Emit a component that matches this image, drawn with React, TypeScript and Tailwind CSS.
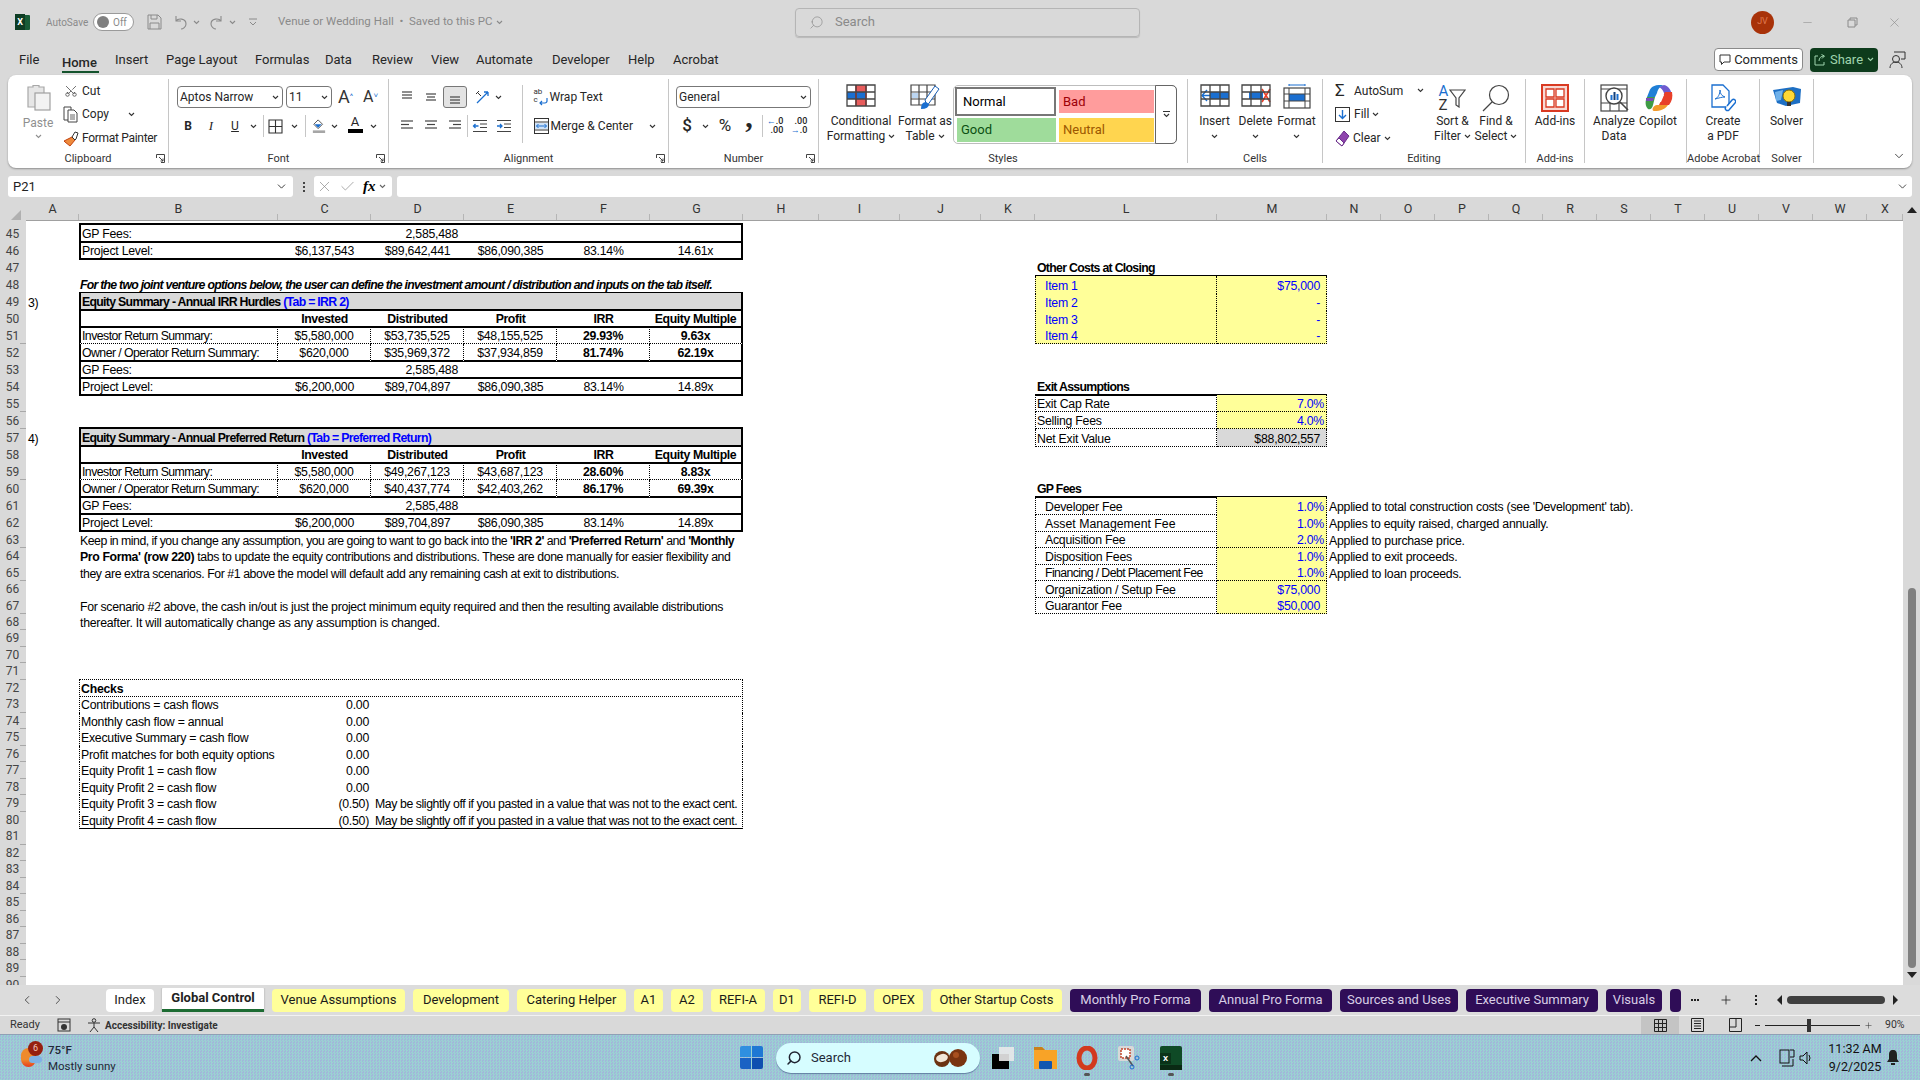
import type { ReactNode } from 'react';
import { Check, ChevronDown, ChevronLeft, ChevronRight, Minus, Plus, Scissors, Search, X } from 'lucide-react';

const GRID =
  'grid grid-cols-[26px_53px_199px_93px_93px_93px_93px_93px_76px_81px_81px_54px_182px_110px_54px_54px_54px_54px_54px_54px_54px_54px_54px_54px_36px]';

const Chev = ({ color = '#333' }: { color?: string }) => (
  <svg width="7" height="5" viewBox="0 0 7 5" className="shrink-0">
    <path d="M1 1l2.5 2.5L6 1" stroke={color} strokeWidth="1.1" fill="none" />
  </svg>
);

const Launcher = () => (
  <svg width="9" height="9" viewBox="0 0 9 9" className="shrink-0">
    <path d="M.5 4V.5H8.5V8.5H5M3 3l4 4M7 4.5V7H4.5" stroke="#444" strokeWidth="1" fill="none" />
  </svg>
);

function Slot({ className, children }: { className: string; children?: ReactNode }) {
  return <div className={`flex items-center justify-center shrink-0 h-full ${className}`}>{children}</div>;
}

function Group({ className, label, launcher, children }: { className: string; label?: string; launcher?: boolean; children: ReactNode }) {
  return (
    <div className={`flex flex-col shrink-0 h-[84px] border-r border-[#c6c6c6] ${className}`}>
      <div className="flex h-[71px]">{children}</div>
      <div className="relative h-[13px] text-center text-[11px] leading-[18px] text-[#333] whitespace-nowrap">
        {label}
        {launcher && (
          <span className="absolute right-[3px] top-[4px] flex">
            <Launcher />
          </span>
        )}
      </div>
    </div>
  );
}

function BigButton({ className, icon, lines, drop }: { className: string; icon: ReactNode; lines: string[]; drop?: 'inline' | 'below' }) {
  return (
    <div className={`flex flex-col items-center shrink-0 pt-[5px] text-[12px] leading-[15px] text-[#262626] ${className}`}>
      <div className="h-[30px] flex items-start justify-center">{icon}</div>
      {lines.map((l, i) => (
        <div key={l} className="flex items-center gap-[3px] whitespace-nowrap h-[15px]">
          {l}
          {drop === 'inline' && i === lines.length - 1 && <Chev />}
        </div>
      ))}
      {drop === 'below' && (
        <div className="h-[15px] flex items-center">
          <Chev />
        </div>
      )}
    </div>
  );
}

const Lines = ({ rows, x = [[2, 14], [2, 14], [2, 14]] }: { rows: number[]; x?: number[][] }) => (
  <svg width="16" height="16" viewBox="0 0 16 16">
    {rows.map((y, i) => (
      <path key={y} d={`M${x[i][0]} ${y}H${x[i][1]}`} stroke="#444" strokeWidth="1.2" />
    ))}
  </svg>
);

const Indent = ({ out }: { out?: boolean }) => (
  <svg width="16" height="14" viewBox="0 0 16 14">
    <path d="M1 1.5H15M8 5H15M8 8.5H15M1 12.5H15" stroke="#444" strokeWidth="1.1" />
    <path d={out ? 'M6.5 7H1.5M3.5 5L1.5 7l2 2' : 'M1 7H6M4 5l2 2-2 2'} stroke="#1b6fd0" strokeWidth="1.3" fill="none" />
  </svg>
);

const PasteIcon = () => (
  <svg width="27" height="28" viewBox="0 0 27 28">
    <path d="M3 4H8V2.5H14V4H19V24H3Z" fill="#e6e6e6" stroke="#a8a8a8" strokeWidth="1.2" />
    <rect x="10" y="10" width="15" height="17" fill="#f2f2f2" stroke="#a0a0a0" strokeWidth="1.2" />
  </svg>
);

const CopyIcon = () => (
  <svg width="15" height="17" viewBox="0 0 15 17">
    <path d="M1 1H8V14H1Z" fill="#fff" stroke="#444" />
    <path d="M5 4H11L14 7V16H5Z" fill="#fff" stroke="#444" />
    <path d="M7 9H12M7 11H12M7 13H12" stroke="#666" />
  </svg>
);

const PainterIcon = () => (
  <svg width="16" height="17" viewBox="0 0 16 17">
    <path d="M9 7l3 3-5 6-5-4-1-1Z" fill="#ee8a3c" stroke="#c2410c" />
    <path d="M9 7l3-5 3 1-2 6-1 1Z" fill="#fff" stroke="#333" />
  </svg>
);

const FillIcon = () => (
  <svg width="16" height="18" viewBox="0 0 16 18">
    <path d="M7 2l5 5-5 5-5-5Z" fill="#fff" stroke="#444" />
    <path d="M3 7h8l-4 4Z" fill="#1b6fd0" />
    <rect x="1" y="14" width="14" height="3" fill="#a6a6a6" />
  </svg>
);

const BordersIcon = () => (
  <svg width="15" height="15" viewBox="0 0 15 15">
    <path d="M1 1H14V14H1ZM7.5 1V14M1 7.5H14" stroke="#333" strokeWidth="1.1" fill="none" />
  </svg>
);

const WrapIcon = () => (
  <div className="relative w-[14px] h-[18px] text-[8px] leading-[8px] text-[#333]">
    <span>ab</span>
    <br />
    <span>c</span>
    <svg width="9" height="9" viewBox="0 0 9 9" className="absolute right-0 bottom-0">
      <path d="M8 1v3a2 2 0 0 1-2 2H1M3 4L1 6l2 2" stroke="#1b6fd0" strokeWidth="1.2" fill="none" />
    </svg>
  </div>
);

const MergeIcon = () => (
  <svg width="15" height="16" viewBox="0 0 15 16">
    <rect x=".5" y=".5" width="14" height="15" fill="#fff" stroke="#333" />
    <path d="M.5 4H14.5M.5 12H14.5" stroke="#333" />
    <rect x="1" y="5" width="13" height="6" fill="#cfe2f7" />
    <path d="M2.5 8H12.5M4.5 6L2.5 8l2 2M10.5 6l2 2-2 2" stroke="#1b6fd0" fill="none" />
  </svg>
);

const Cells = ({ children }: { children?: ReactNode }) => (
  <svg width="30" height="23" viewBox="0 0 30 23">
    <rect x="1" y="1" width="28" height="21" fill="#fff" />
    {children}
    <path d="M1 1H29V22H1ZM1 8H29M1 15H29M10 1V22M20 1V22" stroke="#444" strokeWidth="1.3" fill="none" />
  </svg>
);

const ConditionalIcon = () => (
  <Cells>
    <rect x="10" y="1" width="10" height="21" fill="#e85c5c" />
    <rect x="1" y="8" width="9" height="7" fill="#1b6fd0" />
    <rect x="10" y="8" width="10" height="7" fill="#1b6fd0" />
    <rect x="20" y="8" width="9" height="7" fill="#fff" />
    <path d="M10 1V22M20 1V22" stroke="#d62b2b" strokeWidth="1.5" />
  </Cells>
);

const FormatTableIcon = () => (
  <svg width="30" height="26" viewBox="0 0 30 26">
    <path d="M1 1H25V21H1ZM1 8H25M1 15H25M9 1V21M17 1V21" stroke="#444" strokeWidth="1.2" fill="none" />
    <rect x="2" y="9" width="6" height="5" fill="#bcd6f2" />
    <path d="M17 22L29 5l-4-3-10 14Z" fill="#fff" stroke="#1b5fb5" />
    <path d="M11 25q0-7 5-7l3 2q0 5-8 5Z" fill="#1b6fd0" />
  </svg>
);

const SortIcon = () => (
  <div className="flex items-center gap-[1px]">
    <div className="flex flex-col text-[15px] leading-[14px] text-[#1b6fd0]">
      <span>A</span>
      <span className="text-[#333]">Z</span>
    </div>
    <svg width="17" height="19" viewBox="0 0 17 19">
      <path d="M1 1H16L10 9V18L7 16V9Z" fill="#fff" stroke="#444" strokeWidth="1.2" />
    </svg>
  </div>
);

const FindIcon = () => (
  <svg width="28" height="28" viewBox="0 0 28 28">
    <circle cx="17" cy="11" r="9.5" fill="none" stroke="#444" strokeWidth="1.2" />
    <path d="M10 18L1 27" stroke="#444" strokeWidth="1.3" />
  </svg>
);

const AddInsIcon = () => (
  <svg width="28" height="28" viewBox="0 0 28 28">
    <rect x="1" y="1" width="26" height="26" fill="#f8d9d4" stroke="#d93a22" strokeWidth="2" />
    <path d="M5 5H13V13H5ZM15 5H23V13H15ZM5 15H13V23H5ZM15 15H23V23H15Z" fill="#fff" stroke="#d93a22" strokeWidth="1.3" />
  </svg>
);

const AnalyzeIcon = () => (
  <svg width="29" height="28" viewBox="0 0 29 28">
    <rect x="1" y="1" width="26" height="26" fill="#fff" stroke="#444" strokeWidth="1.2" />
    <path d="M1 5H27M1 19H27M10 19V27M19 19V27" stroke="#444" strokeWidth="1.1" />
    <circle cx="14" cy="12" r="8" fill="#fff" stroke="#444" strokeWidth="1.4" />
    <rect x="10.5" y="11" width="2" height="5" fill="#1b6fd0" />
    <rect x="13.5" y="8" width="2" height="8" fill="#123f7a" />
    <rect x="16.5" y="10" width="2" height="6" fill="#1b6fd0" />
    <path d="M20 18l8 8" stroke="#444" strokeWidth="1.6" />
  </svg>
);

const CopilotIcon = () => (
  <svg width="29" height="28" viewBox="0 0 29 28">
    <path d="M5 8C7 1 12 1 20 1c-4 1-6 4-7 8l-2 4H3Z" fill="#1f7fd6" />
    <path d="M3 13h8l-2 8c-1 4-3 5-5 4-3-3-3-8-1-12Z" fill="#3e9b45" />
    <path d="M2 14h8l-1 3H2Z" fill="#7a4bb5" />
    <path d="M20 1c5 1 8 6 8 13h-7l-1-5c-1-3-3-5-5-6Z" fill="#6e5bd0" />
    <path d="M21 8h7c1 5 0 9-3 13H15Z" fill="#e8402a" />
    <path d="M10 27c-3 0-1-6 3-6h11c-3 4-7 6-14 6Z" fill="#f19a2b" />
    <path d="M14 11h6l-3 7h-6Z" fill="#fff" />
  </svg>
);

const PdfIcon = () => (
  <svg width="26" height="29" viewBox="0 0 26 29">
    <path d="M2 1H13L19 7V23H2Z" fill="#fff" stroke="#1b6fd0" strokeWidth="1.3" />
    <path d="M5 15c3-1 5-5 5-9 0 4 2 6 5 7-3 0-6 1-10 2Z" fill="none" stroke="#1b6fd0" />
    <path d="M17 22l5-6a2 2 0 0 1 3 3l-6 7a2 2 0 0 1-3-3" fill="#fff" stroke="#1b6fd0" strokeWidth="1.5" />
  </svg>
);

const SolverIcon = () => (
  <svg width="30" height="25" viewBox="0 0 30 25">
    <path d="M1 6l20-3 8 2-1 14-14 3-9-3Z" fill="#1d6fc4" />
    <path d="M3 8l8-2-2 10-5 1Z" fill="#6fb1ea" />
    <circle cx="17" cy="12" r="6" fill="#fdd835" stroke="#8a6d00" />
    <rect x="15" y="18" width="4" height="4" fill="#333" />
  </svg>
);

function Ribbon() {
  return (
    <div className="h-[93px] mx-[8px] bg-white rounded-[8px] shadow-[0_1px_2px_rgba(0,0,0,0.35)] pt-[4px] flex text-[12px] text-[#262626] shrink-0">
      <Group className="w-[161px]" label="Clipboard" launcher>
        <div className="ml-[12px] w-[36px] pt-[4px] flex flex-col items-center text-[#8f8f8f]">
          <PasteIcon />
          <div className="mt-[4px] leading-[16px]">Paste</div>
          <div className="mt-[3px]">
            <Chev color="#8f8f8f" />
          </div>
        </div>
        <div className="ml-[7px] flex flex-col">
          <div className="h-[23px] flex items-center">
            <span className="w-[19px] pl-[1px]">
              <Scissors size={14} strokeWidth={1.2} className="-rotate-90 text-[#333]" />
            </span>
            Cut
          </div>
          <div className="h-[24px] flex items-center">
            <span className="w-[19px] flex">
              <CopyIcon />
            </span>
            Copy
            <span className="ml-[19px]">
              <Chev />
            </span>
          </div>
          <div className="h-[24px] flex items-center tracking-[-0.3px]">
            <span className="w-[19px] flex">
              <PainterIcon />
            </span>
            Format Painter
          </div>
        </div>
      </Group>

      <Group className="w-[220px]" label="Font" launcher>
        <div className="pt-[7px]">
          <div className="flex h-[22px] ml-[8px]">
            <div className="w-[106px] border border-[#777] rounded-[4px] flex items-center justify-between pl-[2px] pr-[3px]">
              Aptos Narrow
              <Chev />
            </div>
            <div className="w-[46px] ml-[3px] border border-[#777] rounded-[4px] flex items-center justify-between pl-[2px] pr-[3px]">
              11
              <Chev />
            </div>
            <div className="ml-[6px] w-[17px] text-[18px] leading-[22px] text-[#333] whitespace-nowrap">A<sup className="text-[8px] text-[#1b6fd0]">^</sup></div>
            <div className="ml-[8px] w-[15px] text-[16px] leading-[22px] text-[#333] whitespace-nowrap">A<sup className="text-[8px] text-[#1b6fd0]">˅</sup></div>
          </div>
          <div className="flex h-[22px] mt-[7px] ml-[8px]">
            <Slot className="w-[22px] font-bold">B</Slot>
            <Slot className="w-[24px] italic [font-family:'Liberation_Serif',serif] text-[13px]">I</Slot>
            <Slot className="w-[24px] underline">U</Slot>
            <Slot className="w-[12px]"><Chev /></Slot>
            <div className="ml-[4px] w-px h-[22px] bg-[#c6c6c6]" />
            <Slot className="w-[16px] ml-[3px]"><BordersIcon /></Slot>
            <Slot className="w-[22px]"><Chev /></Slot>
            <div className="w-px h-[22px] bg-[#c6c6c6]" />
            <Slot className="w-[14px] ml-[6px]"><FillIcon /></Slot>
            <Slot className="w-[16px]"><Chev /></Slot>
            <div className="ml-[5px] w-[16px] flex flex-col items-center leading-[14px] text-[13px]">
              A
              <span className="w-[15px] h-[4px] bg-black" />
            </div>
            <Slot className="w-[20px]"><Chev /></Slot>
          </div>
        </div>
      </Group>

      <Group className="w-[280px]" label="Alignment" launcher>
        <div className="w-[133px] pt-[7px]">
          <div className="flex h-[22px] ml-[6px]">
            <Slot className="w-[24px]"><Lines rows={[3, 6, 9]} x={[[3, 13], [3, 13], [3, 13]]} /></Slot>
            <Slot className="w-[24px]"><Lines rows={[5, 8, 11]} x={[[3, 13], [4, 12], [3, 13]]} /></Slot>
            <Slot className="w-[24px] bg-[#e3e3e3] border border-[#777] rounded-[3px]"><Lines rows={[8, 11, 14]} x={[[3, 13], [3, 13], [3, 13]]} /></Slot>
            <Slot className="w-[22px] ml-[4px]">
              <svg width="15" height="15" viewBox="0 0 15 15">
                <path d="M2 13L13 2M13 2H9M13 2V6" stroke="#1b6fd0" strokeWidth="1.3" fill="none" />
                <path d="M2 2l4 4M4 1l-3 3" stroke="#333" fill="none" />
              </svg>
            </Slot>
            <Slot className="w-[10px]"><Chev /></Slot>
          </div>
          <div className="flex h-[22px] mt-[7px] ml-[6px]">
            <Slot className="w-[24px]"><Lines rows={[3, 6.5, 10]} x={[[2, 14], [2, 10], [2, 14]]} /></Slot>
            <Slot className="w-[24px]"><Lines rows={[3, 6.5, 10]} x={[[2, 14], [4, 12], [2, 14]]} /></Slot>
            <Slot className="w-[24px]"><Lines rows={[3, 6.5, 10]} x={[[2, 14], [6, 14], [2, 14]]} /></Slot>
            <div className="w-px h-[22px] bg-[#c6c6c6]" />
            <Slot className="w-[24px]"><Indent out /></Slot>
            <Slot className="w-[24px]"><Indent /></Slot>
          </div>
        </div>
        <div className="w-px h-[58px] mt-[6px] bg-[#c6c6c6]" />
        <div className="pl-[11px] pt-[7px] w-[146px]">
          <div className="h-[22px] flex items-center gap-[2px]">
            <WrapIcon />
            Wrap Text
          </div>
          <div className="h-[22px] mt-[7px] flex items-center gap-[2px]">
            <MergeIcon />
            Merge &amp; Center
            <span className="ml-[14px]">
              <Chev />
            </span>
          </div>
        </div>
      </Group>

      <Group className="w-[150px]" label="Number" launcher>
        <div className="pt-[7px]">
          <div className="ml-[7px] w-[135px] h-[22px] border border-[#777] rounded-[4px] flex items-center justify-between pl-[2px] pr-[3px]">
            General
            <Chev />
          </div>
          <div className="flex h-[22px] mt-[7px] ml-[8px]">
            <Slot className="w-[20px] text-[17px] font-medium">$</Slot>
            <Slot className="w-[16px]"><Chev /></Slot>
            <Slot className="w-[24px] text-[17px]">%</Slot>
            <Slot className="w-[24px]">
              <span className="text-[30px] font-bold leading-none -translate-y-[9px] [font-family:'Liberation_Serif',serif]">,</span>
            </Slot>
            <div className="ml-[1px] w-px h-[22px] bg-[#c6c6c6]" />
            <Slot className="w-[24px] text-[9px] leading-[9px]">
              <div className="font-medium text-right"><span className="text-[#1b6fd0]">←</span>.0<br />.00</div>
            </Slot>
            <Slot className="w-[24px] text-[9px] leading-[9px]">
              <div className="font-medium text-right">.00<br /><span className="text-[#1b6fd0]">→</span>.0</div>
            </Slot>
          </div>
        </div>
      </Group>

      <Group className="w-[369px]" label="Styles">
        <BigButton className="w-[78px] ml-[3px]" icon={<ConditionalIcon />} lines={['Conditional', 'Formatting']} drop="inline" />
        <BigButton className="w-[50px]" icon={<FormatTableIcon />} lines={['Format as', 'Table']} drop="inline" />
        <div className="ml-[3px] mt-[6px] w-[224px] h-[59px] flex border border-[#bdbdbd] rounded-[5px] text-[13px]">
          <div className="w-[201px] grid grid-cols-[103px_97px] grid-rows-[29px_28px] pl-[1px] pt-[1px]">
            <div className="mr-[2px] border-2 border-[#777] bg-white flex items-center pl-[6px] text-black">Normal</div>
            <div className="ml-[1px] mr-[1px] my-[3px] bg-[#ff9c9c] flex items-center pl-[4px] text-[#9c0006]">Bad</div>
            <div className="mx-[2px] my-[2px] bg-[#9fdc9b] flex items-center pl-[4px] text-[#0c4f12]">Good</div>
            <div className="ml-[1px] mr-[1px] my-[2px] bg-[#ffd54f] flex items-center pl-[4px] text-[#9c5700]">Neutral</div>
          </div>
          <div className="flex-1 border border-[#666] rounded-r-[5px] flex flex-col items-center justify-center -my-px -mr-px">
            <div className="w-[7px] h-px bg-[#333] mb-[1px]" />
            <Chev />
          </div>
        </div>
      </Group>

      <Group className="w-[135px]" label="Cells">
        <div className="w-[6px]" />
        <BigButton
          className="w-[41px]"
          icon={
            <Cells>
              <rect x="10" y="8" width="19" height="7" fill="#1b6fd0" />
              <path d="M18 11.5H2M7 6l-5 5.5L7 17" stroke="#1b6fd0" strokeWidth="1.4" fill="#fff" />
            </Cells>
          }
          lines={['Insert']}
          drop="below"
        />
        <BigButton
          className="w-[41px]"
          icon={
            <Cells>
              <rect x="8" y="8" width="14" height="7" fill="#1b6fd0" />
              <path d="M21 5l8 13M29 5l-8 13" stroke="#e8402a" strokeWidth="1.6" />
            </Cells>
          }
          lines={['Delete']}
          drop="below"
        />
        <BigButton
          className="w-[41px]"
          icon={
            <svg width="28" height="25" viewBox="0 0 28 25">
              <path d="M6 1H22M6 0v2M22 0v2" stroke="#1b6fd0" />
              <rect x="1" y="4" width="26" height="20" fill="#fff" stroke="#444" strokeWidth="1.2" />
              <rect x="6" y="10" width="16" height="7" fill="#1b6fd0" />
              <path d="M1 10H27M1 17H27M6 4V24M22 4V24" stroke="#444" />
            </svg>
          }
          lines={['Format']}
          drop="below"
        />
      </Group>

      <Group className="w-[203px]" label="Editing">
        <div className="w-[108px] pl-[12px] flex flex-col">
          <div className="h-[23px] flex items-center">
            <span className="w-[19px] text-[17px] leading-none">Σ</span>
            AutoSum
            <span className="ml-[14px]"><Chev /></span>
          </div>
          <div className="h-[24px] flex items-center">
            <span className="w-[19px] flex">
              <svg width="15" height="15" viewBox="0 0 15 15">
                <rect x=".5" y=".5" width="14" height="14" fill="#fff" stroke="#333" />
                <path d="M7.5 3V11M4 8l3.5 3.5L11 8" stroke="#1b6fd0" strokeWidth="1.4" fill="none" />
              </svg>
            </span>
            Fill
            <span className="ml-[3px]"><Chev /></span>
          </div>
          <div className="h-[24px] flex items-center">
            <span className="w-[18px] flex">
              <svg width="15" height="17" viewBox="0 0 15 17">
                <path d="M9 1l5 5-7 10-6-5Z" fill="#8e44ad" stroke="#6b2e8b" />
                <path d="M4 8l5 5-2 3-6-5Z" fill="#fff" stroke="#6b2e8b" />
              </svg>
            </span>
            Clear
            <span className="ml-[3px]"><Chev /></span>
          </div>
        </div>
        <BigButton className="w-[43px]" icon={<SortIcon />} lines={['Sort &', 'Filter']} drop="inline" />
        <BigButton className="w-[44px]" icon={<FindIcon />} lines={['Find &', 'Select']} drop="inline" />
      </Group>

      <Group className="w-[59px]" label="Add-ins">
        <BigButton className="w-[58px]" icon={<AddInsIcon />} lines={['Add-ins']} />
      </Group>

      <Group className="w-[102px]">
        <BigButton className="w-[58px]" icon={<AnalyzeIcon />} lines={['Analyze', 'Data']} />
        <BigButton className="w-[30px]" icon={<CopilotIcon />} lines={['Copilot']} />
      </Group>

      <Group className="w-[73px]" label="Adobe Acrobat">
        <BigButton className="w-[72px]" icon={<PdfIcon />} lines={['Create', 'a PDF']} />
      </Group>

      <Group className="w-[54px]" label="Solver">
        <BigButton className="w-[53px]" icon={<SolverIcon />} lines={['Solver']} />
      </Group>

      <div className="flex-1 flex justify-end items-end pr-[6px] pb-[5px]">
        <ChevronDown size={14} strokeWidth={1.5} className="text-[#333]" />
      </div>
    </div>
  );
}

function TitleBar() {
  return (
    <div className="h-[44px] flex items-center text-[#8a8a8a] text-[10px] shrink-0">
      <div className="ml-[15px] w-[15px] h-[15px] bg-[#185c37] relative rounded-[1px]">
        <span className="absolute left-0 -top-px w-[10px] h-[16px] text-[9px] font-bold text-white text-center leading-[16px] bg-[#0e3d24]">X</span>
      </div>
      <span className="ml-[16px] w-[40px]">AutoSave</span>
      <div className="ml-[7px] w-[41px] h-[18px] rounded-full border border-[#9a9a9a] bg-white flex items-center pl-[3px] gap-[4px]">
        <span className="w-[12px] h-[12px] rounded-full bg-[#7f7f7f]" />
        <span>Off</span>
      </div>
      <svg width="15" height="16" viewBox="0 0 15 16" className="ml-[13px]">
        <path d="M1 1H11L14 4V15H1ZM4 1V5H10V1M3 15V9H12V15" stroke="#8a8a8a" fill="none" />
      </svg>
      <svg width="15" height="15" viewBox="0 0 15 15" className="ml-[11px]">
        <path d="M3 1V6H8M3 6c2-3 10-3 10 3 0 3-3 5-5 5" stroke="#8a8a8a" strokeWidth="1.1" fill="none" />
      </svg>
      <span className="ml-[5px] w-[6px] flex"><Chev color="#8a8a8a" /></span>
      <svg width="15" height="15" viewBox="0 0 15 15" className="ml-[10px]">
        <path d="M12 1V6H7M12 6C10 3 2 3 2 9c0 3 3 5 5 5" stroke="#8a8a8a" strokeWidth="1.1" fill="none" />
      </svg>
      <span className="ml-[5px] w-[6px] flex"><Chev color="#8a8a8a" /></span>
      <svg width="8" height="9" viewBox="0 0 8 9" className="ml-[14px]">
        <path d="M0 1H8M1 4l3 3 3-3" stroke="#8a8a8a" fill="none" />
      </svg>
      <div className="ml-[21px] w-[517px] text-[11.5px] flex items-center gap-[4px] whitespace-nowrap">
        Venue or Wedding Hall&nbsp;&nbsp;•&nbsp;&nbsp;Saved to this PC
        <Chev color="#8a8a8a" />
      </div>
      <div className="w-[345px] h-[29px] rounded-[4px] border border-[#b5b5b5] shadow-[0_1px_1px_rgba(0,0,0,0.15)] flex items-center pl-[13px] gap-[11px] text-[13px]">
        <Search size={15} strokeWidth={1.1} className="-scale-x-100" />
        Search
      </div>
      <div className="ml-[611px] w-[23px] h-[23px] rounded-full bg-[#a83209] text-[#e07a4f] text-[9px] flex items-center justify-center">JV</div>
      <Minus size={13} strokeWidth={1} className="ml-[27px]" />
      <svg width="11" height="11" viewBox="0 0 11 11" className="ml-[33px]">
        <path d="M1 3H8V10H1ZM3 3V1H10V8H8" stroke="#8a8a8a" fill="none" />
      </svg>
      <X size={15} strokeWidth={1} className="ml-[29px]" />
    </div>
  );
}

function MenuBar() {
  return (
    <div className="h-[31px] flex items-center text-[13px] text-[#262626] relative shrink-0 whitespace-nowrap">
      <span className="ml-[19px] w-[18px]">File</span>
      <span className="ml-[25px] w-[37px] font-medium border-b-2 border-[#14532d] h-[21px] leading-[21px] mt-[5px]">Home</span>
      <span className="ml-[16px] w-[33px]">Insert</span>
      <span className="ml-[18px] w-[70px]">Page Layout</span>
      <span className="ml-[19px] w-[53px]">Formulas</span>
      <span className="ml-[17px] w-[28px]">Data</span>
      <span className="ml-[19px] w-[40px]">Review</span>
      <span className="ml-[19px] w-[28px]">View</span>
      <span className="ml-[17px] w-[58px]">Automate</span>
      <span className="ml-[18px] w-[58px]">Developer</span>
      <span className="ml-[18px] w-[27px]">Help</span>
      <span className="ml-[18px] w-[46px]">Acrobat</span>
      <div className="ml-[995px] w-[89px] h-[23px] border border-[#8a8a8a] bg-white rounded-[4px] flex items-center justify-center gap-[3px]">
        <svg width="12" height="12" viewBox="0 0 12 12">
          <path d="M1 1H11V8H5L2.5 10.5V8H1Z" stroke="#333" fill="none" />
        </svg>
        Comments
      </div>
      <div className="ml-[7px] w-[68px] h-[24px] bg-[#0d3b1c] text-[#9fd4ad] rounded-[4px] flex items-center justify-center gap-[4px]">
        <svg width="12" height="12" viewBox="0 0 12 12">
          <path d="M4 2H1V11H10V8M5 7c0-3 2-5 5-5M7.5 0.5L10.5 2 8 4.5" stroke="#9fd4ad" fill="none" />
        </svg>
        Share
        <Chev color="#9fd4ad" />
      </div>
      <svg width="17" height="18" viewBox="0 0 17 18" className="ml-[11px]">
        <circle cx="7" cy="8" r="3.5" fill="none" stroke="#333" />
        <path d="M1 17c0-4 3-6 6-6s6 2 6 6M5 1H16V8H12" stroke="#333" fill="none" />
      </svg>
    </div>
  );
}

function FormulaBar() {
  return (
    <div className="mt-[8px] h-[21px] mx-[8px] flex text-[13px] shrink-0">
      <div className="w-[285px] bg-white rounded-[3px] flex items-center justify-between pl-[5px] pr-[5px] text-[#222]">
        P21
        <ChevronDown size={13} strokeWidth={1.6} />
      </div>
      <div className="w-[21px] flex flex-col items-center justify-center gap-[2px]">
        <span className="w-[2px] h-[2px] bg-[#444]" />
        <span className="w-[2px] h-[2px] bg-[#444]" />
        <span className="w-[2px] h-[2px] bg-[#444]" />
      </div>
      <div className="w-[78px] bg-white rounded-[3px] flex items-center pl-[2px] text-[#8a8a8a]">
        <X size={17} strokeWidth={1} />
        <Check size={17} strokeWidth={1} className="ml-[6px]" />
        <span className="ml-[7px] text-black italic font-bold [font-family:'Liberation_Serif',serif] text-[15px]">fx</span>
        <span className="ml-[3px]"><Chev color="#666" /></span>
      </div>
      <div className="ml-[5px] flex-1 bg-white rounded-[3px] flex items-center justify-end pr-[3px]">
        <ChevronDown size={13} strokeWidth={1.6} className="text-[#333]" />
      </div>
    </div>
  );
}

const COLS = 'ABCDEFGHIJKLMNOPQRSTUVWX'.split('');

function ColumnHeader() {
  return (
    <div className="flex mt-px h-[23px] shrink-0">
      <div className={`${GRID} flex-1 text-[12.5px] text-[#333]`}>
        <div className="flex items-end pl-[11px] pb-[1px]">
          <div className="border-l-[10px] border-b-[10px] border-l-transparent border-b-[#b0b0b0]" />
        </div>
        {COLS.map(c => (
          <div key={c} className="flex items-center justify-center border-b border-[#a0a0a0] relative after:absolute after:right-0 after:bottom-0 after:h-[6px] after:w-px after:bg-[#b5b5b5]">
            {c}
          </div>
        ))}
      </div>
      <div className="w-[17px] flex items-center justify-center">
        <div className="border-x-[5px] border-b-[6px] border-x-transparent border-b-[#222]" />
      </div>
    </div>
  );
}

function Row({ n, half, children }: { n: number; half?: boolean; children?: ReactNode }) {
  return (
    <div className={`${GRID} ${half ? 'h-[16.5px]' : 'h-[17px]'}`}>
      <div className="col-start-1 row-start-1 flex items-center justify-center pr-[1px] text-[12px] leading-[14px] tracking-normal text-[#444] [font-family:Roboto,sans-serif] bg-[#d9d9d9] bg-no-repeat bg-[length:6px_1px] bg-[position:100%_100%] bg-[linear-gradient(#a8a8a8,#a8a8a8)]">
        {n}
      </div>
      {children}
    </div>
  );
}

function Cell({ className, children }: { className: string; children?: ReactNode }) {
  return (
    <div className={`row-start-1 flex items-center whitespace-nowrap min-w-0 pt-[2px] ${className}`}>
      <span>{children}</span>
    </div>
  );
}

const CENTER = 'justify-center';
const VALUE_COLS = ['col-start-4', 'col-start-5', 'col-start-6', 'col-start-7', 'col-start-8'];

function Title({ children }: { children: ReactNode }) {
  return (
    <Cell className="col-start-3 col-span-6 bg-[#d9d9d9] border-x-2 border-b-2 border-black pl-[1px] font-bold tracking-[-0.7px]">
      {children}
    </Cell>
  );
}

function ColTitles() {
  const labels = ['Invested', 'Distributed', 'Profit', 'IRR', 'Equity Multiple'];
  return (
    <>
      <Cell className="col-start-3 border-l-2 border-b-2 border-black" />
      {labels.map((l, i) => (
        <Cell key={l} className={`${VALUE_COLS[i]} ${CENTER} font-bold tracking-[-0.4px] border-b-2 border-black ${i === 4 ? 'border-r-2' : ''}`}>
          {l}
        </Cell>
      ))}
    </>
  );
}

function ReturnRow({ label, vals, last }: { label: string; vals: string[]; last?: boolean }) {
  const bottom = last ? 'border-b-2 border-b-black' : 'border-b border-b-black [border-bottom-style:dotted]';
  return (
    <>
      <Cell className={`col-start-3 pl-[1px] tracking-[-0.55px] border-l-2 border-l-black border-r border-r-black [border-right-style:dotted] ${bottom}`}>{label}</Cell>
      {vals.map((v, i) => (
        <Cell
          key={i}
          className={`${VALUE_COLS[i]} ${CENTER} ${i > 2 ? 'font-bold' : ''} ${i === 4 ? 'border-r-2 border-r-black' : 'border-r border-r-black [border-right-style:dotted]'} ${bottom}`}
        >
          {v}
        </Cell>
      ))}
    </>
  );
}

function GpRow() {
  return (
    <>
      <Cell className="col-start-3 pl-[1px] border-l-2 border-b-2 border-black">GP Fees:</Cell>
      <Cell className="col-start-4 border-b-2 border-black" />
      <Cell className="col-start-5 justify-end pr-[6px] border-b-2 border-black">2,585,488</Cell>
      <Cell className="col-start-6 col-span-3 border-b-2 border-r-2 border-black" />
    </>
  );
}

function ProjectRow({ vals }: { vals: string[] }) {
  return (
    <>
      <Cell className="col-start-3 pl-[1px] border-l-2 border-b-2 border-black">Project Level:</Cell>
      {vals.map((v, i) => (
        <Cell key={i} className={`${VALUE_COLS[i]} ${CENTER} border-b-2 border-black ${i === 4 ? 'border-r-2' : ''}`}>
          {v}
        </Cell>
      ))}
    </>
  );
}

const DOT = 'border-black border-dotted';

function Side({ label, value, items, valueGray, pr = 'pr-[6px]', note, indent = 'pl-[1px]' }: {
  label: string; value: string; items?: boolean; valueGray?: boolean; pr?: string; note?: string; indent?: string;
}) {
  return (
    <>
      <Cell className={`col-start-13 ${indent} border-l border-r border-b ${DOT} ${items ? 'bg-[#ffff99] text-[#0000ff]' : ''}`}>{label}</Cell>
      <Cell className={`col-start-14 justify-end ${pr} border-r border-b ${DOT} ${valueGray ? 'bg-[#d9d9d9]' : 'bg-[#ffff99] text-[#0000ff]'}`}>{value}</Cell>
      {note && <Cell className="col-start-15 pl-[2px]">{note}</Cell>}
    </>
  );
}

function SideHead({ children }: { children: ReactNode }) {
  return (
    <>
      <Cell className="col-start-13 pl-[2px] font-bold tracking-[-0.7px] border-b-2 border-black">{children}</Cell>
      <Cell className="col-start-14 border-b-2 border-black" />
    </>
  );
}

function CheckRow({ n, label, value, note, last }: { n: number; label: string; value: string; note?: boolean; last?: boolean }) {
  const bottom = last ? 'border-b border-b-black' : '';
  return (
    <Row n={n} half>
      <Cell className={`col-start-3 pl-[1px] border-l border-l-black [border-left-style:dotted] ${bottom}`}>{label}</Cell>
      <Cell className={`col-start-4 justify-end pr-[2px] ${bottom}`}>{value}</Cell>
      <Cell className={`col-start-5 col-span-4 pl-[4px] tracking-[-0.42px] border-r border-r-black [border-right-style:dotted] ${bottom}`}>
        {note ? 'May be slightly off if you pasted in a value that was not to the exact cent.' : ''}
      </Cell>
    </Row>
  );
}

function Sheet() {
  return (
    <div className="flex h-[764px] shrink-0 overflow-hidden">
      <div className="flex-1 bg-white text-[12.3px] leading-[14px] tracking-[-0.25px] text-black [font-family:'Liberation_Sans',Arial,sans-serif]">
        <div className={`${GRID} h-[4px]`}>
          <div className="col-start-1 row-start-1 bg-[#d9d9d9]" />
          <div className="col-start-3 col-span-6 row-start-1 border-b-2 border-black" />
        </div>
        <Row n={45}><GpRow /></Row>
        <Row n={46}><ProjectRow vals={['$6,137,543', '$89,642,441', '$86,090,385', '83.14%', '14.61x']} /></Row>
        <Row n={47}><SideHead>Other Costs at Closing</SideHead></Row>
        <Row n={48}>
          <Cell className="col-start-3 col-span-6 pl-[1px] font-bold italic border-b-2 border-black tracking-[-0.75px]">
            For the two joint venture options below, the user can define the investment amount / distribution and inputs on the tab itself.
          </Cell>
          <Side label="Item 1" value="$75,000" items indent="pl-[9px]" />
        </Row>
        <Row n={49}>
          <Cell className="col-start-2 pl-[2px]">3)</Cell>
          <Title>Equity Summary - Annual IRR Hurdles <span className="text-[#0000ff]">(Tab = IRR 2)</span></Title>
          <Side label="Item 2" value="-" items indent="pl-[9px]" />
        </Row>
        <Row n={50}>
          <ColTitles />
          <Side label="Item 3" value="-" items indent="pl-[9px]" />
        </Row>
        <Row n={51}>
          <ReturnRow label="Investor Return Summary:" vals={['$5,580,000', '$53,735,525', '$48,155,525', '29.93%', '9.63x']} />
          <Side label="Item 4" value="-" items indent="pl-[9px]" />
        </Row>
        <Row n={52}><ReturnRow last label="Owner / Operator Return Summary:" vals={['$620,000', '$35,969,372', '$37,934,859', '81.74%', '62.19x']} /></Row>
        <Row n={53}><GpRow /></Row>
        <Row n={54}>
          <ProjectRow vals={['$6,200,000', '$89,704,897', '$86,090,385', '83.14%', '14.89x']} />
          <SideHead>Exit Assumptions</SideHead>
        </Row>
        <Row n={55}><Side label="Exit Cap Rate" value="7.0%" pr="pr-[2px]" /></Row>
        <Row n={56}>
          <Cell className="col-start-3 col-span-6 border-b-2 border-black" />
          <Side label="Selling Fees" value="4.0%" pr="pr-[2px]" />
        </Row>
        <Row n={57}>
          <Cell className="col-start-2 pl-[2px]">4)</Cell>
          <Title>Equity Summary - Annual Preferred Return <span className="text-[#0000ff]">(Tab = Preferred Return)</span></Title>
          <Side label="Net Exit Value" value="$88,802,557" valueGray />
        </Row>
        <Row n={58}><ColTitles /></Row>
        <Row n={59}><ReturnRow label="Investor Return Summary:" vals={['$5,580,000', '$49,267,123', '$43,687,123', '28.60%', '8.83x']} /></Row>
        <Row n={60}>
          <ReturnRow last label="Owner / Operator Return Summary:" vals={['$620,000', '$40,437,774', '$42,403,262', '86.17%', '69.39x']} />
          <SideHead>GP Fees</SideHead>
        </Row>
        <Row n={61}>
          <GpRow />
          <Side label="Developer Fee" value="1.0%" pr="pr-[2px]" indent="pl-[9px]" note="Applied to total construction costs (see 'Development' tab)." />
        </Row>
        <Row n={62}>
          <ProjectRow vals={['$6,200,000', '$89,704,897', '$86,090,385', '83.14%', '14.89x']} />
          <Side label="Asset Management Fee" value="1.0%" pr="pr-[2px]" indent="pl-[9px] tracking-normal" note="Applies to equity raised, charged annually." />
        </Row>
        <Row n={63} half>
          <Cell className="col-start-3 col-span-6 pl-[1px] tracking-[-0.5px]">
            Keep in mind, if you change any assumption, you are going to want to go back into the <b>'IRR 2'</b> and <b>'Preferred Return'</b> and <b>'Monthly</b>
          </Cell>
          <Side label="Acquisition Fee" value="2.0%" pr="pr-[2px]" indent="pl-[9px]" note="Applied to purchase price." />
        </Row>
        <Row n={64} half>
          <Cell className="col-start-3 col-span-6 pl-[1px] tracking-[-0.38px]">
            <b>Pro Forma' (row 220)</b> tabs to update the equity contributions and distributions. These are done manually for easier flexibility and
          </Cell>
          <Side label="Disposition Fees" value="1.0%" pr="pr-[2px]" indent="pl-[9px]" note="Applied to exit proceeds." />
        </Row>
        <Row n={65} half>
          <Cell className="col-start-3 col-span-6 pl-[1px] tracking-[-0.42px]">
            they are extra scenarios. For #1 above the model will default add any remaining cash at exit to distributions.
          </Cell>
          <Side label="Financing / Debt Placement Fee" value="1.0%" pr="pr-[2px]" indent="pl-[9px] tracking-[-0.6px]" note="Applied to loan proceeds." />
        </Row>
        <Row n={66} half><Side label="Organization / Setup Fee" value="$75,000" indent="pl-[9px]" /></Row>
        <Row n={67} half>
          <Cell className="col-start-3 col-span-6 pl-[1px] tracking-[-0.33px]">
            For scenario #2 above, the cash in/out is just the project minimum equity required and then the resulting available distributions
          </Cell>
          <Side label="Guarantor Fee" value="$50,000" indent="pl-[9px]" />
        </Row>
        <Row n={68} half>
          <Cell className="col-start-3 col-span-6 pl-[1px]">thereafter. It will automatically change as any assumption is changed.</Cell>
        </Row>
        <Row n={69} half />
        <Row n={70} half />
        <Row n={71} half>
          <Cell className={`col-start-3 col-span-6 border-b ${DOT}`} />
        </Row>
        <Row n={72} half>
          <Cell className={`col-start-3 col-span-6 pl-[1px] font-bold border-x border-b ${DOT}`}>Checks</Cell>
        </Row>
        <CheckRow n={73} label="Contributions = cash flows" value="0.00" />
        <CheckRow n={74} label="Monthly cash flow = annual" value="0.00" />
        <CheckRow n={75} label="Executive Summary = cash flow" value="0.00" />
        <CheckRow n={76} label="Profit matches for both equity options" value="0.00" />
        <CheckRow n={77} label="Equity Profit 1 = cash flow" value="0.00" />
        <CheckRow n={78} label="Equity Profit 2 = cash flow" value="0.00" />
        <CheckRow n={79} label="Equity Profit 3 = cash flow" value="(0.50)" note />
        <CheckRow n={80} label="Equity Profit 4 = cash flow" value="(0.50)" note last />
        {[81, 82, 83, 84, 85, 86, 87, 88, 89, 90].map(n => (
          <Row key={n} n={n} half />
        ))}
      </div>
      <div className="w-[17px] flex flex-col items-center bg-[#d9d9d9]">
        <div className="mt-[367px] w-[8px] h-[380px] rounded-full bg-[#808080]" />
        <div className="mt-[4px] border-x-[5px] border-t-[6px] border-x-transparent border-t-[#222]" />
      </div>
    </div>
  );
}

const YELLOW = 'bg-[#ffff99] text-[#1a1a1a]';
const PURPLE = 'bg-[#2f0d57] text-[#d9cfe6]';
const TABS: [string, string][] = [
  ['Venue Assumptions', `w-[133px] ${YELLOW}`],
  ['Development', `w-[96px] ${YELLOW}`],
  ['Catering Helper', `w-[109px] ${YELLOW}`],
  ['A1', `w-[29px] ${YELLOW}`],
  ['A2', `w-[32px] ${YELLOW}`],
  ['REFI-A', `w-[54px] ${YELLOW}`],
  ['D1', `w-[28px] ${YELLOW}`],
  ['REFI-D', `w-[57px] ${YELLOW}`],
  ['OPEX', `w-[49px] ${YELLOW}`],
  ['Other Startup Costs', `w-[131px] ${YELLOW}`],
  ['Monthly Pro Forma', `w-[131px] ${PURPLE}`],
  ['Annual Pro Forma', `w-[123px] ${PURPLE}`],
  ['Sources and Uses', `w-[118px] ${PURPLE}`],
  ['Executive Summary', `w-[132px] ${PURPLE}`],
  ['Visuals', `w-[56px] ${PURPLE}`],
  ['', `w-[11px] ${PURPLE}`],
];

function TabBar() {
  return (
    <div className="h-[30px] flex items-center shrink-0 text-[13px] bg-[#dcdcdc]">
      <ChevronLeft size={14} strokeWidth={1.4} className="ml-[20px] text-[#333]" />
      <ChevronRight size={14} strokeWidth={1.4} className="ml-[17px] text-[#333]" />
      <div className="ml-[41px] w-[1575px] flex gap-[8px] overflow-hidden items-center whitespace-nowrap">
        <div className="w-[48px] h-[23px] bg-white rounded-[4px] flex items-center justify-center text-[#222]">Index</div>
        <div className="w-[102px] h-[26px] bg-white rounded-t-[4px] shadow-[0_0_2px_rgba(0,0,0,0.3)] flex items-center justify-center font-bold text-[#222] border-b-[3px] border-[#1c6b32] -mt-[2px]">
          Global Control
        </div>
        {TABS.map(([label, cls], i) => (
          <div key={i} className={`h-[23px] shrink-0 rounded-[4px] flex items-center justify-center ${cls}`}>
            {label}
          </div>
        ))}
      </div>
      <span className="ml-[10px] flex gap-px w-[12px]">
        <span className="w-[2px] h-[2px] bg-[#222]" />
        <span className="w-[2px] h-[2px] bg-[#222]" />
        <span className="w-[2px] h-[2px] bg-[#222]" />
      </span>
      <Plus size={14} strokeWidth={1.4} className="ml-[16px] text-[#222]" />
      <div className="ml-[22px] flex flex-col gap-[2px]">
        <span className="w-[2px] h-[2px] bg-[#222]" />
        <span className="w-[2px] h-[2px] bg-[#222]" />
        <span className="w-[2px] h-[2px] bg-[#222]" />
      </div>
      <div className="ml-[20px] border-y-[5px] border-r-[5px] border-y-transparent border-r-[#222]" />
      <div className="ml-[5px] w-[98px] h-[8px] rounded-full bg-[#404040]" />
      <div className="ml-[8px] border-y-[5px] border-l-[5px] border-y-transparent border-l-[#222]" />
    </div>
  );
}

function StatusBar() {
  return (
    <div className="h-[20px] flex items-center shrink-0 text-[11px] text-[#333] bg-[#d9d9d9] border-t border-[#f2f2f2] border-b border-b-[#8fa0b5]">
      <span className="ml-[10px] w-[28px]">Ready</span>
      <svg width="14" height="14" viewBox="0 0 14 14" className="ml-[19px]">
        <rect x="1" y="1" width="12" height="12" fill="none" stroke="#333" />
        <path d="M1 4H13" stroke="#333" />
        <circle cx="7" cy="9" r="3" fill="#333" />
      </svg>
      <svg width="14" height="15" viewBox="0 0 14 15" className="ml-[16px]">
        <circle cx="7" cy="2.5" r="1.8" fill="none" stroke="#333" />
        <path d="M1 5H13M7 5V9L3 14M7 9l4 5" stroke="#333" fill="none" />
      </svg>
      <span className="ml-[4px] font-bold w-[113px] whitespace-nowrap text-[10px]">Accessibility: Investigate</span>
      <div className="ml-[1423px] w-[38px] h-full bg-[#c4c4c4] flex items-center justify-center">
        <svg width="13" height="13" viewBox="0 0 13 13">
          <path d="M.5.5H12.5V12.5H.5ZM4.5.5V12.5M8.5.5V12.5M.5 4.5H12.5M.5 8.5H12.5" stroke="#222" fill="none" />
        </svg>
      </div>
      <svg width="13" height="14" viewBox="0 0 13 14" className="ml-[12px]">
        <path d="M.5.5H12.5V13.5H.5ZM3 3H10M3 5.5H10M3 8H10M3 10.5H10" stroke="#222" fill="none" />
      </svg>
      <svg width="13" height="14" viewBox="0 0 13 14" className="ml-[25px]">
        <path d="M.5.5H12.5V13.5H.5ZM.5 9H7V.5" stroke="#222" fill="none" />
      </svg>
      <span className="ml-[13px] w-[5px] h-px bg-[#222]" />
      <div className="ml-[5px] relative w-[95px] h-px bg-[#222]">
        <span className="absolute left-[42px] -top-[6px] w-[4px] h-[13px] bg-[#333]" />
      </div>
      <Plus size={9} strokeWidth={1.4} className="ml-[4px]" />
      <span className="ml-[12px] text-[10.5px]">90%</span>
    </div>
  );
}

const RunDot = () => <span className="absolute left-1/2 -ml-[3px] -bottom-[6px] w-[6px] h-[3px] rounded-full bg-[#555]" />;

function Taskbar() {
  return (
    <div className="h-[45px] flex items-center shrink-0 relative text-[#1f2937] text-[11.5px] bg-[repeating-conic-gradient(#9ad2d2_0_25%,#a2b6da_0_50%)] bg-[length:3px_3px]">
      <div className="ml-[21px] relative w-[15px] h-[19px]">
        <span className="block w-[15px] h-[19px] rounded-full bg-[linear-gradient(#ee8a2c_60%,#e63a1e)]" />
        <span className="absolute left-[8px] top-[8px] w-[13px] h-[7px] rounded-full bg-[#7fb2e5]" />
        <span className="absolute left-[7px] -top-[7px] w-[15px] h-[15px] rounded-full bg-[#96200f] text-[#f3c6bc] text-[9px] flex items-center justify-center">6</span>
      </div>
      <div className="ml-[12px] w-[692px] leading-[16px]">
        <div className="font-medium">75°F</div>
        <div>Mostly sunny</div>
      </div>
      <div className="w-[23px] h-[23px] grid grid-cols-2 gap-px rounded-[2px] overflow-hidden">
        <span className="bg-[#2f8fe0]" />
        <span className="bg-[#1e78d4]" />
        <span className="bg-[#1a62c4]" />
        <span className="bg-[#0f4fb0]" />
      </div>
      <div className="ml-[13px] w-[204px] h-[30px] rounded-full bg-[#d6fdff] shadow-[0_1px_1px_rgba(60,80,130,0.6)] flex items-center pl-[10px] text-[13px]">
        <Search size={16} strokeWidth={2.2} className="-scale-x-100 text-[#1f2330]" />
        <span className="ml-[9px] w-[121px]">Search</span>
        <svg width="36" height="20" viewBox="0 0 36 20">
          <circle cx="10" cy="11" r="8" fill="#6b3312" />
          <ellipse cx="10" cy="10" rx="6" ry="4" fill="#f1e7d8" transform="rotate(-15 10 10)" />
          <circle cx="26" cy="10" r="9" fill="#7a3410" />
          <circle cx="24" cy="7" r="3" fill="#a8501f" />
        </svg>
      </div>
      <div className="ml-[12px] relative w-[22px] h-[22px]">
        <span className="absolute left-0 bottom-0 w-[17px] h-[15px] bg-black" />
        <span className="absolute right-0 top-0 w-[15px] h-[14px] bg-[#e9e9e9]/90" />
      </div>
      <svg width="25" height="24" viewBox="0 0 25 24" className="ml-[19px]">
        <path d="M1 1H9L12 4H24V23H1Z" fill="#f8a327" />
        <path d="M1 1H9L12 4H1Z" fill="#c9801a" />
        <rect x="6" y="15" width="13" height="8" rx="1" fill="#1256b0" />
      </svg>
      <div className="ml-[18px] relative w-[22px] h-[24px]">
        <svg width="22" height="24" viewBox="0 0 22 24">
          <ellipse cx="11" cy="12" rx="8" ry="10" fill="none" stroke="#d23a1e" strokeWidth="5" />
        </svg>
        <RunDot />
      </div>
      <svg width="23" height="24" viewBox="0 0 23 24" className="ml-[20px]">
        <rect x="0" y="0" width="16" height="15" rx="2" fill="#d8d8d8" />
        <path d="M3 3H12V12H3Z" fill="#fff" stroke="#c2452d" strokeDasharray="2 1" strokeWidth="1.5" />
        <path d="M8 10l7 10" stroke="#555" strokeWidth="1.5" />
        <circle cx="19" cy="12" r="2" fill="none" stroke="#1b6fd0" />
        <circle cx="14" cy="21" r="2" fill="none" stroke="#1b6fd0" />
      </svg>
      <div className="ml-[19px] relative w-[22px] h-[24px] bg-[#0f4a26] rounded-[2px]">
        <span className="absolute left-0 top-[7px] w-[11px] h-[11px] bg-[#0a3319] text-white text-[8px] font-bold text-center leading-[11px]">X</span>
        <span className="absolute left-0 bottom-0 w-full h-[5px] bg-[#0a2a14]" />
        <RunDot />
      </div>
      <span className="ml-[568px]">
        <svg width="12" height="8" viewBox="0 0 12 8">
          <path d="M1 7l5-5 5 5" stroke="#111" strokeWidth="1.3" fill="none" />
        </svg>
      </span>
      <svg width="16" height="18" viewBox="0 0 16 18" className="ml-[17px]">
        <rect x="1" y="1" width="9" height="13" fill="none" stroke="#111" />
        <path d="M3 17H14V10M11 1H15V8H11" stroke="#111" fill="none" />
      </svg>
      <svg width="14" height="14" viewBox="0 0 14 14" className="ml-[4px]">
        <path d="M1 5H4L8 1V13L4 9H1Z" fill="none" stroke="#111" />
        <path d="M10 4q2 3 0 6" stroke="#111" fill="none" />
      </svg>
      <div className="ml-[11px] w-[62px] text-center text-[12.5px] leading-[18px] text-[#111]">
        <div>11:32 AM</div>
        <div>9/2/2025</div>
      </div>
      <svg width="12" height="17" viewBox="0 0 12 17" className="ml-[1px]">
        <path d="M6 1c3 0 4 2 4 5v4l2 3H0l2-3V6c0-3 1-5 4-5Z" fill="#222" />
        <rect x="4" y="14" width="4" height="2" fill="#222" />
      </svg>
    </div>
  );
}

export default function App() {
  return (
    <div className="w-[1920px] h-[1080px] overflow-hidden flex flex-col bg-[#d9d9d9] [font-family:Roboto,sans-serif]">
      <TitleBar />
      <MenuBar />
      <Ribbon />
      <FormulaBar />
      <ColumnHeader />
      <Sheet />
      <TabBar />
      <StatusBar />
      <Taskbar />
    </div>
  );
}
